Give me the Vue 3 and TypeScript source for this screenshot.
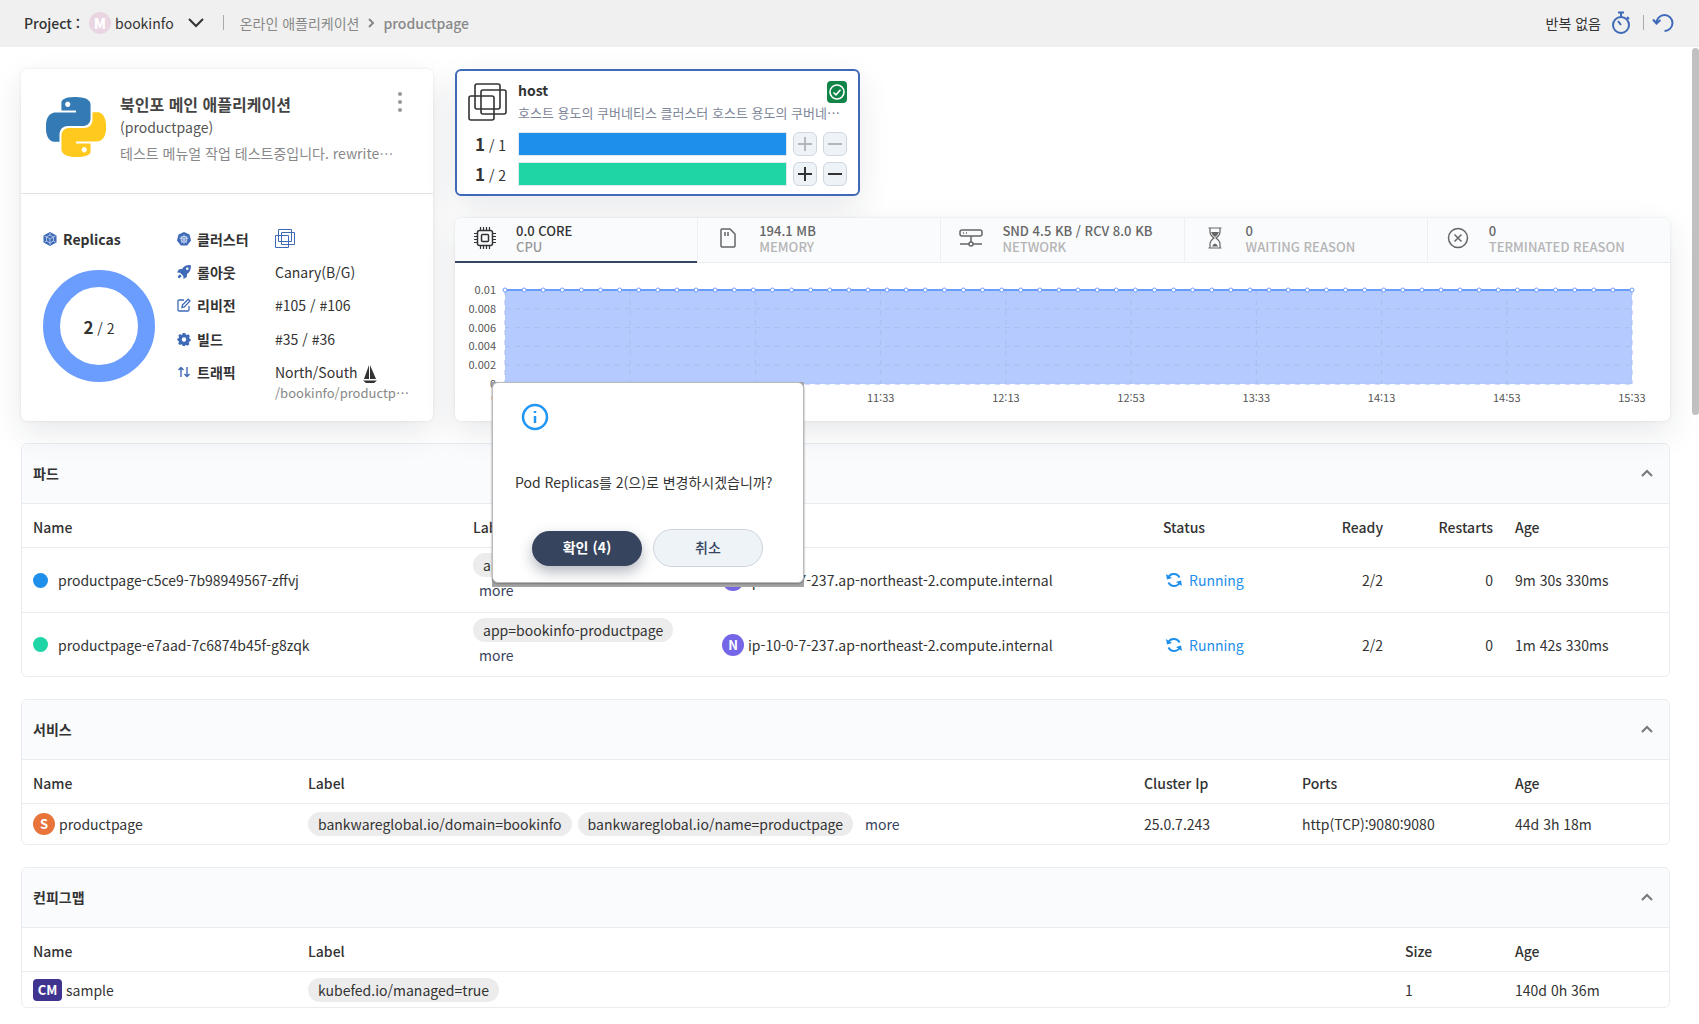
<script setup lang="ts">
import { computed, ref } from 'vue'

interface Metric {
  id: string
  value: string
  label: string
}

interface Replica {
  id: string
  current: number
  total: number
  color: string
  locked: boolean
}

interface Pod {
  name: string
  color: string
  label: string
  node: string
  status: string
  ready: string
  restarts: number
  age: string
}

const metrics: Metric[] = [
  { id: 'cpu', value: '0.0 CORE', label: 'CPU' },
  { id: 'memory', value: '194.1 MB', label: 'MEMORY' },
  { id: 'network', value: 'SND 4.5 KB / RCV 8.0 KB', label: 'NETWORK' },
  { id: 'waiting', value: '0', label: 'WAITING REASON' },
  { id: 'terminated', value: '0', label: 'TERMINATED REASON' },
]
const activeMetric = ref('cpu')

const replicas = ref<Replica[]>([
  { id: 'a', current: 1, total: 1, color: '#1e8feb', locked: true },
  { id: 'b', current: 1, total: 2, color: '#1fd5a6', locked: false },
])

const pods: Pod[] = [
  {
    name: 'productpage-c5ce9-7b98949567-zffvj',
    color: '#1e8feb',
    label: 'app=bookinfo-productpage',
    node: 'ip-10-0-7-237.ap-northeast-2.compute.internal',
    status: 'Running',
    ready: '2/2',
    restarts: 0,
    age: '9m 30s 330ms',
  },
  {
    name: 'productpage-e7aad-7c6874b45f-g8zqk',
    color: '#1fd5a6',
    label: 'app=bookinfo-productpage',
    node: 'ip-10-0-7-237.ap-northeast-2.compute.internal',
    status: 'Running',
    ready: '2/2',
    restarts: 0,
    age: '1m 42s 330ms',
  },
]

const yTicks = ['0.01', '0.008', '0.006', '0.004', '0.002', '0']
const xTicks = ['09:33', '10:13', '10:53', '11:33', '12:13', '12:53', '13:33', '14:13', '14:53', '15:33']
const samples = 60
const points = computed(() => Array.from({ length: samples }, (_, i) => `${(i / (samples - 1)) * 100}%`))
const columns = computed(() => xTicks.map((_, i) => `${(i / (xTicks.length - 1)) * 100}%`))
const lines = computed(() => yTicks.map((_, i) => `${(i / (yTicks.length - 1)) * 100}%`))

const dialogOpen = ref(true)
</script>

<template>
  <div class="page" lang="ko">
    <header class="topbar">
      <span class="project-label">Project :</span>
      <button class="project" type="button">
        <span class="avatar">M</span>
        <span>bookinfo</span>
        <svg class="caret" width="16" height="10" viewBox="0 0 16 10"><path d="M1 1l7 7 7-7" /></svg>
      </button>
      <span class="bar" />
      <nav class="crumbs">
        <a href="#">온라인 애플리케이션</a>
        <svg width="6" height="10" viewBox="0 0 6 10"><path d="M1 1l4 4-4 4" /></svg>
        <b>productpage</b>
      </nav>
      <div class="tools">
        <span>반복 없음</span>
        <button type="button" aria-label="timer">
          <svg width="20" height="24" viewBox="0 0 20 24">
            <circle cx="10" cy="14" r="8" /><path d="M7 1.500h6M10 2v4M16 6l2 2M10 14l-3-4" />
          </svg>
        </button>
        <span class="bar short" />
        <button type="button" aria-label="refresh">
          <svg width="22" height="20" viewBox="0 0 22 20">
            <path d="M4.500 10A8 8 0 1 1 12.500 18M1 6.500l3.500 4 4-3.500" />
          </svg>
        </button>
      </div>
    </header>

    <main>
      <div class="overview">
        <section class="card summary">
          <div class="app">
            <svg class="logo" width="60" height="60" viewBox="0 0 24 24">
              <path fill="#347ab4" d="M14.25.18l.9.2.73.26.59.3.45.32.34.34.25.34.16.33.1.3.04.26.02.2-.01.13V8.5l-.05.63-.13.55-.21.46-.26.38-.3.31-.33.25-.35.19-.35.14-.33.1-.3.07-.26.04-.21.02H8.77l-.69.05-.59.14-.5.22-.41.27-.33.32-.27.35-.2.36-.15.37-.1.35-.07.32-.04.27-.02.21v3.06H3.17l-.21-.03-.28-.07-.32-.12-.35-.18-.36-.26-.36-.36-.35-.46-.32-.59-.28-.73-.21-.88-.14-1.05-.05-1.23.06-1.22.16-1.04.24-.87.32-.71.36-.57.4-.44.42-.33.42-.24.4-.16.36-.1.32-.05.24-.01h.16l.06.01h8.16v-.83H6.18l-.01-2.75-.02-.37.05-.34.11-.31.17-.28.25-.26.31-.23.38-.2.44-.18.51-.15.58-.12.64-.1.71-.06.77-.04.84-.02 1.27.05zm-6.3 1.98l-.23.33-.08.41.08.41.23.34.33.22.41.09.41-.09.33-.22.23-.34.08-.41-.08-.41-.23-.33-.33-.22-.41-.09-.41.09z" />
              <path fill="#ffc91d" d="M21.04 6.11l.28.06.32.12.35.18.36.27.36.35.35.47.32.59.28.73.21.88.14 1.04.05 1.23-.06 1.23-.16 1.04-.24.86-.32.71-.36.57-.4.45-.42.33-.42.24-.4.16-.36.09-.32.05-.24.02-.16-.01h-8.22v.82h5.84l.01 2.76.02.36-.05.34-.11.31-.17.29-.25.25-.31.24-.38.2-.44.17-.51.15-.58.13-.64.09-.71.07-.77.04-.84.01-1.27-.04-1.07-.14-.9-.2-.73-.25-.59-.3-.45-.33-.34-.34-.25-.34-.16-.33-.1-.3-.04-.25-.02-.2.01-.13v-5.34l.05-.64.13-.54.21-.46.26-.38.3-.32.33-.24.35-.2.35-.14.33-.1.3-.06.26-.04.21-.02.13-.01h5.84l.69-.05.59-.14.5-.21.41-.28.33-.32.27-.35.2-.36.15-.36.1-.35.07-.32.04-.28.02-.21V6.07h2.09l.14.01zm-6.47 14.25l-.23.33-.08.41.08.41.23.33.33.23.41.08.41-.08.33-.23.23-.33.08-.41-.08-.41-.23-.33-.33-.23-.41-.08-.41.08z" />
            </svg>
            <div class="app-text">
              <h1>북인포 메인 애플리케이션</h1>
              <p class="app-id">(productpage)</p>
              <p class="app-desc">테스트 메뉴얼 작업 테스트중입니다. rewrite…</p>
            </div>
            <button class="kebab" type="button" aria-label="menu">
              <svg width="4" height="20" viewBox="0 0 4 20"><circle cx="2" cy="2" r="2" /><circle cx="2" cy="10" r="2" /><circle cx="2" cy="18" r="2" /></svg>
            </button>
          </div>

          <div class="details">
            <div class="replicas">
              <h2>
                <svg width="14" height="14" viewBox="0 0 14 14">
                  <path class="fill" d="M7 0l6.500 3.500v7L7 14 .5 10.500v-7z" />
                  <path class="cut" stroke-width=".7" d="M7 3l3.500 2v4L7 11 3.500 9V5zM3.500 5L7 7l3.500-2M7 7v4M7 1v2M1.500 4l2 1M12.500 4l-2 1M1.500 10l2-1M12.500 10l-2-1M7 13v-2" />
                </svg>
                Replicas
              </h2>
              <div class="donut">
                <svg width="112" height="112" viewBox="0 0 112 112"><circle cx="56" cy="56" r="47.500" /></svg>
                <span class="donut-text"><b>2</b> / 2</span>
              </div>
            </div>

            <dl>
              <dt>
                <svg width="14" height="14" viewBox="0 0 14 14">
                  <path class="fill" d="M7 0l5.500 2.600L14 8.500 10.200 13.500H3.800L0 8.500 1.500 2.600z" />
                  <circle class="cut" cx="7" cy="7.300" r="3" /><circle class="cut" cx="7" cy="7.300" r=".8" />
                  <path class="cut" stroke-width=".7" d="M7 2.500v4M7 8v4M2.500 6l3.700 1M11.500 6L7.800 7M4 11l2.400-3M10 11L7.600 8M3.500 4l2.800 2.500M10.500 4L7.700 6.500" />
                </svg>
                클러스터
              </dt>
              <dd>
                <svg class="squares" width="20" height="20" viewBox="0 0 20 20">
                  <path d="M3.500.5h13v12h-13zM6.500 3.500h13v12h-13zM.5 6.500h13v12H.5z" />
                </svg>
              </dd>
              <dt>
                <svg width="14" height="14" viewBox="0 0 14 14">
                  <path class="fill" fill-rule="evenodd" d="M13.800.2C9.500-.3 7 1.500 5 4L2 4.200 0 7.500l3 .3 3.300 3.200.2 3L9.800 12l.2-3c2.700-2 4.300-4.500 3.800-8.800zM10.300 2.400a1.300 1.300 0 1 1 0 2.600 1.300 1.300 0 0 1 0-2.600zM3 9.500C1.500 9.800 1 11 1 13c2 0 3.200-.5 3.500-2z" />
                </svg>
                롤아웃
              </dt>
              <dd>Canary(B/G)</dd>
              <dt>
                <svg width="14" height="14" viewBox="0 0 14 14">
                  <path class="stroke" stroke-width="1.3" d="M7 2H2.200Q1 2 1 3.200v8.600Q1 13 2.200 13h8.600q1.200 0 1.200-1.200V8M5 9.500L5.400 7 11.200 1.200l1.800 1.800L7.300 8.900z" />
                </svg>
                리비전
              </dt>
              <dd>#105 / #106</dd>
              <dt>
                <svg width="14" height="14" viewBox="0 0 14 14">
                  <path class="fill" fill-rule="evenodd" d="M5.700 1h2.600l.4 1.600 1 .5 1.500-.9 1.700 1.800-.8 1.500.3.900 1.200.5v2.200l-1.500.6-.4.900.7 1.500-1.700 1.600-1.500-.8-.9.400L7.800 14H5.700l-.5-1.300-.9-.4-1.500.8-1.600-1.700.8-1.500-.4-.9L.4 8.600V6.500L1.700 6l.4-1-.8-1.400L3 2l1.400.9.9-.4zM7 5.300a2.200 2.200 0 1 0 0 4.400 2.200 2.200 0 0 0 0-4.400z" />
                </svg>
                빌드
              </dt>
              <dd>#35 / #36</dd>
              <dt>
                <svg width="14" height="14" viewBox="0 0 14 14">
                  <path class="stroke" stroke-width="1.4" d="M4 12V2.500M1.500 5L4 2.500 6.500 5M10 2v9.500M7.500 9l2.500 2.500L12.500 9" />
                </svg>
                트래픽
              </dt>
              <dd>
                North/South
                <svg class="boat" width="14" height="20" viewBox="0 0 14 20">
                  <path d="M6 1v14H1zM7 1l6 14H7zM0 16.500h14L11 19H3z" />
                </svg>
                <span class="path">/bookinfo/productp…</span>
              </dd>
            </dl>
          </div>
        </section>

        <div class="side">
          <section class="host">
            <div class="host-head">
              <svg class="host-icon" width="39" height="38" viewBox="0 0 39 38" stroke-width="1.6">
                <rect x="7" y="1" width="25" height="25" rx="2" /><rect x="13" y="7" width="25" height="24" rx="2" /><rect x="1" y="13" width="25" height="24" rx="2" />
              </svg>
              <div class="host-text">
                <h2>host</h2>
                <p>호스트 용도의 쿠버네티스 클러스터 호스트 용도의 쿠버네…</p>
              </div>
              <span class="ok">
                <svg width="16" height="16" viewBox="0 0 16 16" stroke-width="1.6"><circle cx="8" cy="8" r="7" /><path d="M4.500 8.500l2.500 2.300 4.500-5" /></svg>
              </span>
            </div>
            <div v-for="r in replicas" :key="r.id" class="scale">
              <span class="count"><b>{{ r.current }}</b> / {{ r.total }}</span>
              <span class="track"><span class="value" :style="{ background: r.color }" /></span>
              <button type="button" :disabled="r.locked" aria-label="increase">
                <svg width="14" height="14" viewBox="0 0 14 14"><path d="M7 0v14M0 7h14" /></svg>
              </button>
              <button type="button" :disabled="r.locked" aria-label="decrease">
                <svg width="14" height="14" viewBox="0 0 14 14"><path d="M0 7h14" /></svg>
              </button>
            </div>
          </section>

          <section class="card metrics">
            <div class="tabs" role="tablist">
              <button
                v-for="m in metrics"
                :key="m.id"
                type="button"
                role="tab"
                :class="{ active: m.id === activeMetric }"
                @click="activeMetric = m.id"
              >
                <svg width="24" height="24" viewBox="0 0 24 24" stroke-width="1.5">
                  <g v-if="m.id === 'cpu'">
                    <rect x="4.500" y="4.500" width="15" height="15" rx="2" /><rect x="8.500" y="8.500" width="7" height="7" rx="1" />
                    <path stroke-width="1.2" d="M7.500 1v3M10.500 1v3M13.500 1v3M16.500 1v3M7.500 20v3M10.500 20v3M13.500 20v3M16.500 20v3M1 7.500h3M1 10.500h3M1 13.500h3M1 16.500h3M20 7.500h3M20 10.500h3M20 13.500h3M20 16.500h3" />
                  </g>
                  <g v-else-if="m.id === 'memory'">
                    <path d="M6 3h8l5 5v12q0 1-1 1H6q-1 0-1-1V4q0-1 1-1zM9 6v4M12 6v4" />
                  </g>
                  <g v-else-if="m.id === 'network'">
                    <rect x="1" y="4" width="22" height="6" rx="2" /><circle cx="12" cy="18" r="2" />
                    <path d="M12 10v6M1 18h9M14 18h9M4 7h1M7 7h1" />
                  </g>
                  <g v-else-if="m.id === 'waiting'" stroke-width="1.2">
                    <path d="M5.500 2h13M5.500 22h13M7 2v4q0 3 4 6-4 3-4 6v4M17 2v4q0 3-4 6 4 3 4 6v4" />
                    <path class="sand" d="M8 6h8q-1 3-4 5-3-2-4-5zM9 20.500q1-2.500 3-3 2 .5 3 3z" />
                  </g>
                  <g v-else>
                    <circle cx="12" cy="12" r="9.500" /><path d="M8.500 8.500l7 7M15.500 8.500l-7 7" />
                  </g>
                </svg>
                <span class="tab-text"><strong>{{ m.value }}</strong><span>{{ m.label }}</span></span>
              </button>
            </div>
            <div class="chart">
              <ul class="y-axis"><li v-for="t in yTicks" :key="t">{{ t }}</li></ul>
              <div class="plot">
                <svg class="series" width="100%" height="94">
                  <rect class="area" width="100%" height="94" />
                  <line v-for="x in columns" :key="'c' + x" class="grid" :x1="x" :x2="x" y1="0" y2="100%" />
                  <line v-for="y in lines" :key="'r' + y" class="grid" x1="0" x2="100%" :y1="y" :y2="y" />
                  <line class="stroke-line" x1="0" x2="100%" y1="0" y2="0" />
                  <circle v-for="x in points" :key="x" :cx="x" cy="0" r="2" />
                </svg>
                <ul class="x-axis"><li v-for="t in xTicks" :key="t"><span>{{ t }}</span></li></ul>
              </div>
            </div>
          </section>
        </div>
      </div>

      <section class="panel pods">
        <header><h2>파드</h2><button type="button" aria-label="collapse"><svg width="12" height="8" viewBox="0 0 12 8"><path d="M1 7l5-5 5 5" /></svg></button></header>
        <table>
          <colgroup><col /><col class="w249" /><col class="w441" /><col class="w132" /><col class="w110" /><col class="w110" /><col class="w165" /></colgroup>
          <thead><tr><th>Name</th><th>Label</th><th>Node</th><th>Status</th><th class="num">Ready</th><th class="num">Restarts</th><th>Age</th></tr></thead>
          <tbody>
            <tr v-for="p in pods" :key="p.name">
              <td><div class="cell"><span class="dot" :style="{ background: p.color }" />{{ p.name }}</div></td>
              <td><div class="stack"><span class="chip">{{ p.label }}</span><a href="#" class="more">more</a></div></td>
              <td><div class="cell tight"><span class="badge node">N</span>{{ p.node }}</div></td>
              <td>
                <div class="cell running">
                  <svg width="16" height="16" viewBox="0 0 16 16"><path d="M2 6a6.300 6.300 0 0 1 11.500-.5M14 10a6.300 6.300 0 0 1-11.500.5" /><path class="tip" d="M0 2l1 5.500 5-1.500zM16 14l-1-5.500-5 1.500z" /></svg>
                  {{ p.status }}
                </div>
              </td>
              <td class="num">{{ p.ready }}</td>
              <td class="num">{{ p.restarts }}</td>
              <td>{{ p.age }}</td>
            </tr>
          </tbody>
        </table>
      </section>

      <section class="panel services">
        <header><h2>서비스</h2><button type="button" aria-label="collapse"><svg width="12" height="8" viewBox="0 0 12 8"><path d="M1 7l5-5 5 5" /></svg></button></header>
        <table>
          <colgroup><col class="w275" /><col /><col class="w158" /><col class="w213" /><col class="w165" /></colgroup>
          <thead><tr><th>Name</th><th>Label</th><th>Cluster Ip</th><th>Ports</th><th>Age</th></tr></thead>
          <tbody>
            <tr>
              <td><div class="cell tight"><span class="badge service">S</span>productpage</div></td>
              <td>
                <div class="chips">
                  <span class="chip">bankwareglobal.io/domain=bookinfo</span>
                  <span class="chip">bankwareglobal.io/name=productpage</span>
                  <a href="#" class="more">more</a>
                </div>
              </td>
              <td>25.0.7.243</td>
              <td>http(TCP):9080:9080</td>
              <td>44d 3h 18m</td>
            </tr>
          </tbody>
        </table>
      </section>

      <section class="panel configs">
        <header><h2>컨피그맵</h2><button type="button" aria-label="collapse"><svg width="12" height="8" viewBox="0 0 12 8"><path d="M1 7l5-5 5 5" /></svg></button></header>
        <table>
          <colgroup><col class="w275" /><col /><col class="w110" /><col class="w165" /></colgroup>
          <thead><tr><th>Name</th><th>Label</th><th>Size</th><th>Age</th></tr></thead>
          <tbody>
            <tr>
              <td><div class="cell tight"><span class="badge config">CM</span>sample</div></td>
              <td><div class="chips"><span class="chip">kubefed.io/managed=true</span></div></td>
              <td>1</td>
              <td>140d 0h 36m</td>
            </tr>
          </tbody>
        </table>
      </section>
    </main>

    <div class="scroll-thumb" />

    <div v-if="dialogOpen" class="dialog-frame">
      <div class="dialog" role="dialog" aria-label="replicas">
        <svg class="info" width="28" height="28" viewBox="0 0 28 28" stroke-width="2.5"><circle cx="14" cy="14" r="12" /><path d="M14 13v7M14 8v2" /></svg>
        <p>Pod Replicas를 2(으)로 변경하시겠습니까?</p>
        <div class="actions">
          <button class="primary" type="button" @click="dialogOpen = false">확인 (4)</button>
          <button class="secondary" type="button" @click="dialogOpen = false">취소</button>
        </div>
      </div>
    </div>
  </div>
</template>

<style>
body {
  margin: 0;
  background: #fff;
}
</style>

<style scoped>
* {
  box-sizing: border-box;
}
.page {
  position: relative;
  font-family: "Noto Sans CJK KR", "Noto Sans", sans-serif;
  font-size: 14px;
  line-height: 20px;
  color: #333;
}
h1, h2, p, ul, dl, dd {
  margin: 0;
  padding: 0;
}
ul {
  list-style: none;
}
button {
  padding: 0;
  border: 0;
  background: none;
  font: inherit;
  color: inherit;
  cursor: pointer;
}
a {
  color: inherit;
  text-decoration: none;
}
svg {
  flex: none;
  fill: none;
}

.topbar {
  display: flex;
  align-items: center;
  height: 47px;
  padding: 0 25px 2px 24px;
  background: #f0f0f0;
}
.project-label {
  width: 65px;
  font-weight: 500;
}
.project {
  display: flex;
  align-items: center;
  gap: 4px;
}
.avatar {
  width: 22px;
  height: 22px;
  border-radius: 50%;
  background: #ead5e3;
  color: #fff;
  font-weight: 900;
  line-height: 22px;
  text-align: center;
}
.caret {
  margin-left: 10px;
  stroke: #333;
  stroke-width: 2;
}
.bar {
  width: 1px;
  height: 15px;
  margin: 0 16px 0 19px;
  background: #aaa;
}
.bar.short {
  margin: 0 8px 0 12px;
}
.crumbs {
  display: flex;
  align-items: center;
  gap: 9px;
  color: #888;
}
.crumbs svg {
  stroke: #888;
  stroke-width: 2;
}
.crumbs b {
  font-weight: 500;
}
.tools {
  display: flex;
  align-items: center;
  margin-left: auto;
}
.tools button {
  display: flex;
}
.tools span:first-child {
  margin-right: 10px;
}
.tools svg {
  stroke: #3f6ab8;
  stroke-width: 2;
}

main {
  padding: 22px 29px 16px 21px;
}
.overview {
  position: relative;
  z-index: 1;
  display: flex;
  gap: 22px;
  margin-bottom: 22px;
}
.card {
  border-radius: 6px;
  background: #fff;
  box-shadow: 0 12px 32px rgba(30, 40, 60, 0.1), 0 0 3px rgba(30, 40, 60, 0.1);
}
.summary {
  flex: 0 0 412px;
  min-width: 0;
}
.app {
  display: flex;
  height: 125px;
  padding: 23px 31px 0 25px;
  border-bottom: 1px solid #dfe2e6;
}
.logo {
  margin-top: 5px;
}
.app-text {
  flex: 1;
  min-width: 0;
  margin-left: 14px;
  white-space: nowrap;
}
.app-text h1 {
  font-size: 16px;
  font-weight: 700;
  line-height: 24px;
  color: #444;
}
.app-id {
  line-height: 22px;
  color: #555;
}
.app-desc {
  margin-top: 3px;
  line-height: 24px;
  color: #888;
}
.kebab {
  display: flex;
  align-self: flex-start;
}
.kebab svg {
  fill: #999;
}
.details {
  display: flex;
  padding: 35px 22px 0;
}
.replicas {
  flex: none;
  width: 134px;
}
.details h2,
.details dt {
  display: flex;
  align-items: center;
  gap: 6px;
  font-size: 14px;
  font-weight: 700;
}
.fill {
  fill: #3f6ab8;
}
.cut {
  stroke: #d9e4f7;
}
.stroke {
  stroke: #3f6ab8;
}
.donut {
  position: relative;
  width: 112px;
  height: 112px;
  margin-top: 21px;
}
.donut circle {
  stroke: #6b9dff;
  stroke-width: 17;
}
.donut-text {
  position: absolute;
  inset: 0;
  line-height: 114px;
  text-align: center;
}
.donut-text b,
.count b {
  font-size: 17px;
}
dl {
  display: grid;
  grid-template-columns: 98px 1fr;
  row-gap: 13px;
  white-space: nowrap;
}
dt {
  height: 20px;
}
.squares {
  display: block;
  stroke: #3f6ab8;
}
.boat {
  margin-left: 2px;
  fill: #333;
  vertical-align: middle;
}
.path {
  display: block;
  font-size: 13px;
  line-height: 18px;
  color: #888;
}
dd {
  height: 20px;
}

.side {
  flex: 1;
  min-width: 0;
}
.host {
  max-width: 405px;
  margin-bottom: 22px;
  padding: 9px 11px 8px;
  border: 2px solid #3f6ab8;
  border-radius: 6px;
  background: #fff;
  box-shadow: 0 12px 32px rgba(30, 40, 60, 0.1);
}
.host-head {
  position: relative;
  display: flex;
  gap: 11px;
  margin-bottom: 6px;
}
.host-icon {
  margin-top: 3px;
  stroke: #333;
}
.host-text {
  line-height: 26px;
  white-space: nowrap;
}
.host-text h2 {
  font-size: 14px;
  font-weight: 700;
  line-height: 20px;
}
.host-text p {
  font-size: 13px;
  color: #7d8599;
}
.ok {
  position: absolute;
  top: 1px;
  right: 0;
  display: flex;
  align-items: center;
  justify-content: center;
  width: 20px;
  height: 22px;
  border-radius: 4px;
  background: #118548;
}
.ok svg {
  stroke: #fff;
}
.scale {
  display: flex;
  align-items: center;
  gap: 6px;
}
.scale + .scale {
  margin-top: 6px;
}
.count {
  width: 44px;
  padding-left: 7px;
  white-space: nowrap;
}
.track {
  flex: 1;
  height: 24px;
  border: 1px solid #e3e8ee;
}
.value {
  display: block;
  height: 100%;
}
.scale button {
  display: flex;
  align-items: center;
  justify-content: center;
  width: 24px;
  height: 24px;
  border: 1px solid #cfd6e0;
  border-radius: 6px;
  background: #eef3f8;
}
.scale svg {
  stroke: #333;
  stroke-width: 2;
}
.scale button:disabled svg {
  stroke: #b4b8be;
}

.tabs {
  display: flex;
  height: 45px;
  border-bottom: 1px solid #e9ecf1;
  border-radius: 6px 6px 0 0;
  background: #fafbfd;
}
.tabs button {
  display: flex;
  flex: 1;
  gap: 19px;
  min-width: 0;
  padding: 5px 0 0 18px;
  border-left: 1px solid #edeff3;
  color: #666;
  text-align: left;
  white-space: nowrap;
}
.tabs button:first-child {
  border-left: 0;
}
.tabs button.active {
  height: 45px;
  border-bottom: 2px solid #37445d;
  color: #333;
}
.tabs svg {
  margin-top: 3px;
  stroke: currentColor;
}
.tabs svg .sand {
  fill: currentColor;
  stroke: none;
}
.tab-text {
  display: flex;
  flex-direction: column;
  font-size: 13px;
  font-weight: 500;
  line-height: 16px;
}
.tab-text strong {
  font-weight: 500;
}
.tab-text span {
  color: #b5b5b5;
}
.tabs button.active .tab-text span {
  color: #999;
}
.chart {
  display: flex;
  height: 158px;
  padding: 27px 38px 0 0;
}
.y-axis {
  display: flex;
  flex-direction: column;
  justify-content: space-between;
  width: 50px;
  height: 112px;
  margin-top: -10px;
  padding-right: 9px;
  font-size: 11px;
  line-height: 18px;
  text-align: right;
  color: #555;
}
.y-axis li {
  height: 18px;
}
.plot {
  flex: 1;
  min-width: 0;
}
.series {
  display: block;
  overflow: visible;
}
.area {
  fill: #b5cbff;
}
.grid {
  stroke: #a8bfec;
  stroke-dasharray: 5 5;
}
.stroke-line {
  stroke: #6b9dff;
  stroke-width: 2;
}
.series circle {
  fill: #fff;
  stroke: #6b9dff;
}
.x-axis {
  display: flex;
  justify-content: space-between;
  margin-top: 4px;
  font-size: 11px;
  line-height: 18px;
  color: #555;
}
.x-axis li {
  display: flex;
  justify-content: center;
  width: 0;
}

.panel {
  margin-bottom: 22px;
  border: 1px solid #e9edf1;
  border-radius: 6px;
}
.panel header {
  display: flex;
  align-items: center;
  justify-content: space-between;
  height: 60px;
  padding: 0 16px 2px 11px;
  border-bottom: 1px solid #e9edf1;
  border-radius: 6px 6px 0 0;
  background: #fafbfd;
}
.panel h2 {
  font-size: 14px;
  font-weight: 700;
}
.panel header svg {
  display: block;
  stroke: #777;
  stroke-width: 2;
}
table {
  width: 100%;
  border-spacing: 0;
  table-layout: fixed;
}
th,
td {
  padding: 0 11px;
  text-align: left;
  white-space: nowrap;
}
th {
  height: 44px;
  padding-top: 3px;
  border-bottom: 1px solid #e9edf1;
  font-weight: 500;
}
.pods td {
  height: 65px;
  border-bottom: 1px solid #e9edf1;
}
.pods tr:last-child td {
  height: 63px;
  border-bottom: 0;
}
.services td {
  height: 40px;
}
.configs td {
  height: 35px;
}
.num {
  text-align: right;
}
.w110 { width: 110px; }
.w132 { width: 132px; }
.w158 { width: 158px; }
.w165 { width: 165px; }
.w213 { width: 213px; }
.w249 { width: 249px; }
.w275 { width: 275px; }
.w441 { width: 441px; }
.cell {
  display: flex;
  align-items: center;
  gap: 10px;
}
.cell.tight {
  gap: 4px;
}
.dot {
  width: 15px;
  height: 15px;
  border-radius: 50%;
}
.badge {
  width: 22px;
  height: 22px;
  border-radius: 50%;
  color: #fff;
  font-size: 13px;
  font-weight: 700;
  line-height: 22px;
  text-align: center;
}
.badge.node {
  background: #7566e8;
}
.badge.service {
  background: #e8743b;
}
.badge.config {
  width: 29px;
  border-radius: 4px;
  background: #3f3591;
}
.running {
  gap: 7px;
  padding-left: 3px;
  color: #1e8feb;
}
.running svg {
  stroke: #1e8feb;
  stroke-width: 2;
}
.running .tip {
  fill: #1e8feb;
  stroke: none;
}
.stack {
  display: flex;
  flex-direction: column;
  align-items: flex-start;
  padding-bottom: 4px;
}
.chips {
  display: flex;
  align-items: center;
  gap: 6px;
}
.chip {
  height: 24px;
  padding: 0 10px;
  border-radius: 12px;
  background: #ececec;
  line-height: 24px;
}
.more {
  padding-left: 6px;
  line-height: 26px;
  color: #37445d;
}

.scroll-thumb {
  position: absolute;
  top: 48px;
  right: 0;
  width: 7px;
  height: 367px;
  border-radius: 4px;
  background: #c1c1c1;
}

.dialog-frame {
  position: absolute;
  top: 382px;
  left: 492px;
  z-index: 2;
  width: 312px;
  padding-bottom: 4px;
  background: #a5a5a5;
}
.dialog {
  display: flex;
  flex-direction: column;
  height: 201px;
  padding: 20px 22px 0;
  border: 1px solid #bbb;
  border-radius: 6px;
  background: #fff;
  box-shadow: 0 1px 2px #777;
}
.info {
  margin-left: 6px;
  stroke: #2196f3;
}
.dialog p {
  margin-top: 40px;
  white-space: nowrap;
  line-height: 22px;
}
.actions {
  display: flex;
  align-items: center;
  gap: 11px;
  margin: 36px 0 0 17px;
}
.actions button {
  width: 110px;
  height: 35px;
  padding-bottom: 2px;
  border-radius: 19px;
}
.actions .primary {
  background: #37445d;
  box-shadow: 0 6px 14px rgba(40, 50, 75, 0.35);
  color: #fff;
  font-weight: 700;
}
.actions .secondary {
  height: 38px;
  border: 1px solid #cdd3de;
  background: #eef3f8;
  color: #37445d;
  font-weight: 500;
}
</style>
